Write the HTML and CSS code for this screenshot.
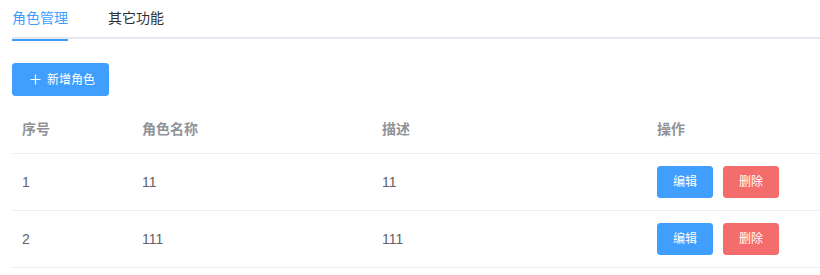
FILE: index.html
```html
<!DOCTYPE html>
<html lang="zh-CN">
<head>
<meta charset="utf-8">
<title>角色管理</title>
<link rel="stylesheet" href="styles.css">
</head>
<body>
<div class="page">
  <div class="tabs">
    <div class="tab active">角色管理</div>
    <div class="tab">其它功能</div>
  </div>
  <div class="toolbar">
    <button class="btn btn-primary btn-add">
      <svg class="plus" width="11" height="11" viewBox="0 0 11 11"><path d="M5.5 0.5v10M0.5 5.5h10" stroke="#fff" stroke-width="1.2" fill="none"/></svg>
      <span>新增角色</span>
    </button>
  </div>
  <div class="table">
    <div class="row head">
      <div class="cell">序号</div>
      <div class="cell">角色名称</div>
      <div class="cell">描述</div>
      <div class="cell">操作</div>
    </div>
    <div class="row">
      <div class="cell">1</div>
      <div class="cell">11</div>
      <div class="cell">11</div>
      <div class="cell actions"><button class="btn btn-primary">编辑</button><button class="btn btn-danger">删除</button></div>
    </div>
    <div class="row">
      <div class="cell">2</div>
      <div class="cell">111</div>
      <div class="cell">111</div>
      <div class="cell actions"><button class="btn btn-primary">编辑</button><button class="btn btn-danger">删除</button></div>
    </div>
  </div>
</div>
</body>
</html>
```

FILE: styles.css
```css
html, body {
  margin: 0;
  padding: 0;
  background: #fff;
}
body {
  font-family: "Liberation Sans", "Noto Sans CJK SC", sans-serif;
  font-size: 14px;
  color: #606266;
}
.page {
  margin-left: 12px;
  width: 808px;
}
.tabs {
  display: flex;
  height: 39px;
  border-bottom: 2px solid #e4e7ed;
  box-sizing: border-box;
}
.tab {
  height: 39px;
  line-height: 37px;
  padding: 0 20px;
  color: #303133;
  font-size: 14px;
  box-sizing: border-box;
  position: relative;
}
.tab:first-child {
  padding-left: 0;
}
.tab.active {
  color: #409eff;
}
.tab.active::after {
  content: "";
  position: absolute;
  left: 0;
  right: 20px;
  bottom: -2px;
  height: 2px;
  background: #409eff;
}
.toolbar {
  padding-top: 24px;
  height: 33px;
  margin-bottom: 10px;
}
.btn {
  font-family: inherit;
  font-size: 12px;
  line-height: 1;
  height: 32px;
  padding: 0 15px;
  border-radius: 3px;
  border: 1px solid transparent;
  color: #fff;
  cursor: pointer;
  display: inline-flex;
  align-items: center;
  box-sizing: border-box;
}
.btn-add {
  height: 33px;
  width: 97px;
  padding: 0 0 0 17px;
  gap: 6px;
}
.plus {
  display: block;
}
.btn-primary {
  background: #409eff;
  border-color: #409eff;
}
.btn-danger {
  background: #f56c6c;
  border-color: #f56c6c;
}
.btn + .btn {
  margin-left: 10px;
}
.table {
  width: 808px;
}
.row {
  display: grid;
  grid-template-columns: 120px 240px 275px 1fr;
  border-bottom: 1px solid #ebeef5;
  padding: 12px 0;
  align-items: center;
}
.row.head {
  color: #909399;
  font-weight: bold;
}
.cell {
  padding-left: 10px;
  line-height: 23px;
}
.cell.actions {
  display: flex;
  height: 32px;
  align-items: center;
}
```
